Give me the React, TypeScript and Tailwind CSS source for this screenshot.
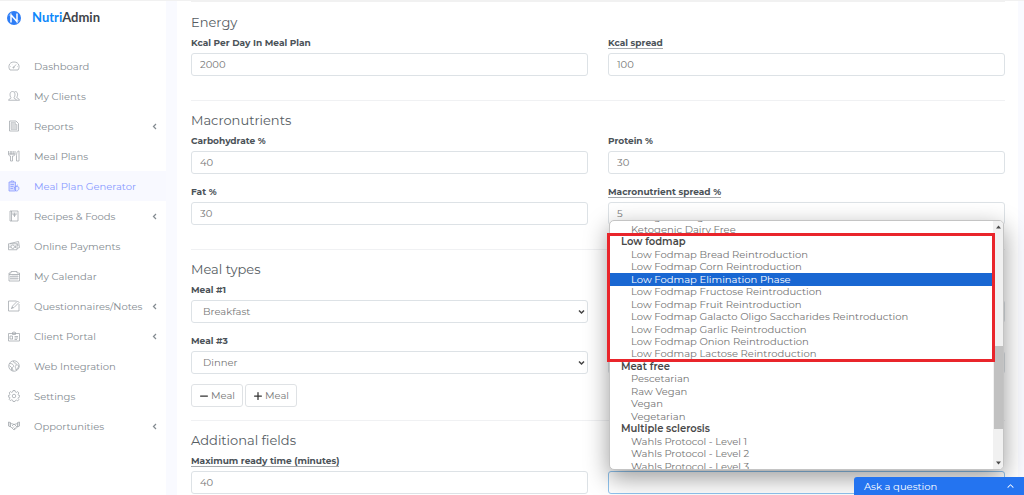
import { useId } from 'react';
import type { ReactNode } from 'react';
import clsx from 'clsx';
import { FaChevronUp, FaMinus, FaPlus } from 'react-icons/fa6';

interface NavItem {
  label: string;
  icon: ReactNode;
  active?: boolean;
  expandable?: boolean;
}

const NAV_ITEMS: NavItem[] = [
  {
    label: 'Dashboard',
    icon: (
      <>
        <path d="M4 20C0 15 1 4 12 4s12 11 8 16z" />
        <path d="M11 15l5-6M5 13h1M18 13h1M8 8.500l.5.5" />
        <circle cx="11" cy="15" r="1.200" />
      </>
    ),
  },
  {
    label: 'My Clients',
    icon: (
      <>
        <path d="M1 20.500c0-3 5-2.500 5-5-3-4-3-12.500 3-12.500s6 8.500 3 12.500c0 2.500 5 2 5 5z" />
        <path d="M13 3.500c6-2 8 6 4.500 11 0 2.500 5.500 2.500 5.500 6h-6" />
      </>
    ),
  },
  {
    label: 'Reports',
    expandable: true,
    icon: (
      <>
        <path d="M3 2h13l5 5v15H3z" />
        <path d="M6 5h9v4h3v10H6z" fill="currentColor" fillOpacity="0.4" strokeOpacity="0.5" />
      </>
    ),
  },
  {
    label: 'Meal Plans',
    icon: (
      <>
        <path d="M1 2v7c0 2 3 3 4 3v10h4V12c2 0 5-1 5-3V2M4.500 2v7M7.500 2v7M10.500 2v7" />
        <path d="M1 8h13" />
        <path d="M22 2c-4 0-5 4-5 12v8h5z" />
      </>
    ),
  },
  {
    label: 'Meal Plan Generator',
    active: true,
    icon: (
      <>
        <path d="M2 4h13v18H2z" fill="currentColor" fillOpacity="0.3" />
        <path d="M6 4V2h5v2M5 9h7M5 13h6M5 17h5" />
        <path d="M13 14c2-2 9-2 9 2s-3 6-5 6-5-3-4-8zM17 13c0-2 1-3 3-3" fill="currentColor" fillOpacity="0.15" />
      </>
    ),
  },
  {
    label: 'Recipes & Foods',
    expandable: true,
    icon: (
      <>
        <path d="M4 2h16v20H4zM7 2v20" />
        <path d="M10 5v5h6V5M13 5v9" />
      </>
    ),
  },
  {
    label: 'Online Payments',
    icon: (
      <>
        <path d="M1 7.500h17v12H1z" />
        <path d="M4 7L21 3l2 12-5 2" />
        <circle cx="9.500" cy="13.500" r="3.500" />
        <path d="M4 11v5M15 11v5M19 7l1 5" />
      </>
    ),
  },
  {
    label: 'My Calendar',
    icon: (
      <>
        <path d="M2 6h4V3h12v3h5v16H2zM2 9h21" />
        <path d="M6 11v9M10 9v11M14 9v11M18 9v11M4 13h17M4 17h17" strokeOpacity="0.7" />
      </>
    ),
  },
  {
    label: 'Questionnaires/Notes',
    expandable: true,
    icon: (
      <>
        <path d="M17 2H1v20h21V8" />
        <path d="M7 17l2-5L19 2l3 3-10 10zM7 17l3-3" />
      </>
    ),
  },
  {
    label: 'Client Portal',
    expandable: true,
    icon: (
      <>
        <path d="M1 7h22v15H1zM9 9V5h1.500a1.500 1.500 0 013 0H15v4z" />
        <path d="M4 18v-6h5v6M4 18h6M13 13h7M13 16h7M13 19h5" />
      </>
    ),
  },
  {
    label: 'Web Integration',
    icon: (
      <>
        <circle cx="12" cy="12" r="10.500" />
        <path d="M3 7c4 0 7 1 8 4s-3 3-2 6l1 5M3 11l4 4v5M11 2c-1 3 2 4 4 4s2 4 0 6 1 3 1 8c3-2 4-5 6-8-2-1-3-3-5-2" />
      </>
    ),
  },
  {
    label: 'Settings',
    icon: (
      <>
        <path d="M10 1h4l.7 3 2 .9 2.700-1.700 2.300 2.600-1.600 2.700.8 2 2.600.5v3l-2.600.7-.8 2 1.600 2.700-2.300 2.400-2.700-1.600-2 .8L14 23h-4l-.7-2.700-2-.8-2.700 1.600-2.300-2.400 1.600-2.700-.8-2L.5 14v-3l2.600-.5.8-2-1.600-2.700 2.300-2.600 2.700 1.700 2-.9z" />
        <circle cx="12" cy="12" r="3.500" />
      </>
    ),
  },
  {
    label: 'Opportunities',
    expandable: true,
    icon: (
      <>
        <path d="M1 4l4 1v9l-4-2zM23 4l-4 1v9l4-2z" fill="currentColor" fillOpacity="0.3" />
        <path d="M5 7l5 1 2 1 7-2M5 13l7 7 7-6M8 12l4-4 6 6M9 16l3-3M12 18l3-3" />
      </>
    ),
  },
];

type DietRow = { label: string; kind?: 'group' | 'selected' };

const DIET_ROWS: DietRow[] = [
  { label: 'Ketogenic Vegan' },
  { label: 'Ketogenic Dairy Free' },
  { label: 'Low fodmap', kind: 'group' },
  { label: 'Low Fodmap Bread Reintroduction' },
  { label: 'Low Fodmap Corn Reintroduction' },
  { label: 'Low Fodmap Elimination Phase', kind: 'selected' },
  { label: 'Low Fodmap Fructose Reintroduction' },
  { label: 'Low Fodmap Fruit Reintroduction' },
  { label: 'Low Fodmap Galacto Oligo Saccharides Reintroduction' },
  { label: 'Low Fodmap Garlic Reintroduction' },
  { label: 'Low Fodmap Onion Reintroduction' },
  { label: 'Low Fodmap Lactose Reintroduction' },
  { label: 'Meat free', kind: 'group' },
  { label: 'Pescetarian' },
  { label: 'Raw Vegan' },
  { label: 'Vegan' },
  { label: 'Vegetarian' },
  { label: 'Multiple sclerosis', kind: 'group' },
  { label: 'Wahls Protocol - Level 1' },
  { label: 'Wahls Protocol - Level 2' },
  { label: 'Wahls Protocol - Level 3' },
];

const MEALS = ['Breakfast', 'Lunch', 'Dinner', 'Snack'];

const CONTROL =
  'block h-[23px] w-full rounded-[3px] border border-[#dde2e6] bg-white text-[10px] text-[#777] outline-none';

function Sidebar() {
  return (
    <aside className="w-[166px] shrink-0 bg-white pt-[7px]">
      <a href="#" className="flex h-5 items-center gap-[11px] pl-[7px]">
        <svg className="size-[14px]" viewBox="0 0 28 28" aria-hidden="true">
          <circle cx="14" cy="14" r="14" fill="#2d7df6" />
          <path d="M8 23V8l12 13V5" fill="none" stroke="#fff" strokeWidth="3" />
          <path d="M4 10c1-3 3-5 6-6M24 18c-1 3-3 5-6 6" fill="none" stroke="#9cc4ff" strokeWidth="1.500" />
        </svg>
        <span className="font-['Lato'] text-[13px] font-bold text-[#3f444a]">
          <span className="text-[#0d88fb]">Nutri</span>Admin
        </span>
      </a>
      <nav className="mt-[23px]">
        {NAV_ITEMS.map((item) => (
          <a
            key={item.label}
            href="#"
            className={clsx(
              'flex h-[30px] items-center pr-2 pl-2 text-[10px]',
              item.active ? 'bg-[#f8f9ff] text-[#8899ff]' : 'text-[#858c92]'
            )}
          >
            <svg
              className={clsx('mr-[14px] size-3 shrink-0', item.active ? 'text-[#8899ff]' : 'text-[#a0a6ab]')}
              viewBox="0 0 24 24"
              fill="none"
              stroke="currentColor"
              strokeWidth={1.5}
              aria-hidden="true"
            >
              {item.icon}
            </svg>
            <span className="flex-1 whitespace-nowrap">{item.label}</span>
            {item.expandable && (
              <svg className="size-[7px]" viewBox="0 0 14 14" fill="none" stroke="currentColor" strokeWidth={2.5} aria-hidden="true">
                <path d="M10 2L5 7l5 5" />
              </svg>
            )}
          </a>
        ))}
      </nav>
    </aside>
  );
}

interface FieldProps {
  label: string;
  hint?: boolean;
  covered?: boolean;
  children: (id: string) => ReactNode;
}

function Field({ label, hint, covered, children }: FieldProps) {
  const id = useId();
  return (
    <div>
      <label
        htmlFor={id}
        className={clsx(
          'mb-[3px] flex h-[14px] text-[9px] leading-[14px] font-bold text-[#4c5359]',
          covered && 'invisible'
        )}
      >
        <span className={clsx('whitespace-nowrap', hint && 'h-[13px] border-b border-[#a5a9ad]')}>{label}</span>
      </label>
      {children(id)}
    </div>
  );
}

function TextField({ label, value, hint }: { label: string; value: string; hint?: boolean }) {
  return (
    <Field label={label} hint={hint}>
      {(id) => <input id={id} type="text" defaultValue={value} className={clsx(CONTROL, 'px-2')} />}
    </Field>
  );
}

function MealField({ label, value, covered }: { label: string; value: string; covered?: boolean }) {
  return (
    <Field label={label} covered={covered}>
      {(id) => (
        <div className="relative">
          <select id={id} defaultValue={value} className={clsx(CONTROL, 'appearance-none px-[11px]')}>
            {MEALS.map((meal) => (
              <option key={meal}>{meal}</option>
            ))}
          </select>
          <svg
            className="pointer-events-none absolute top-2 right-[3px] size-[7px]"
            viewBox="0 0 14 14"
            fill="none"
            stroke="#444"
            strokeWidth={3}
            aria-hidden="true"
          >
            <path d="M2 5l5 5 5-5" />
          </svg>
        </div>
      )}
    </Field>
  );
}

function Section({ title, footer, children }: { title: string; footer?: ReactNode; children: ReactNode }) {
  return (
    <section className={clsx('border-b border-[#f0f1f3] pt-[9px]', footer ? 'pb-[13px]' : 'pb-6')}>
      <h2 className="mb-1 text-[13px] leading-5 text-[#565d63]">{title}</h2>
      <div className="grid grid-cols-2 gap-x-5 gap-y-[11px]">{children}</div>
      {footer}
    </section>
  );
}

/** Open list of diets, scrolled part way down, hanging above its select. */
function DietPopup() {
  return (
    <div className="absolute inset-x-px bottom-full z-10 mb-px h-[250px]">
      <div className="flex h-full overflow-hidden rounded-[5px] border border-[#c4c4c4] bg-white shadow-[0_8px_24px_rgba(0,0,0,0.4)]">
        <ul role="listbox" aria-label="Diets" className="-mt-[10px] grid h-[262px] flex-1 auto-rows-fr">
          {DIET_ROWS.map((row) => (
            <li
              key={row.label}
              role={row.kind === 'group' ? 'presentation' : 'option'}
              aria-selected={row.kind === 'selected'}
              className={clsx(
                'flex items-center text-[10px] leading-3 whitespace-nowrap',
                row.kind === 'group' && 'pl-[11px] font-semibold text-[#484848]',
                row.kind === 'selected' && 'bg-[#1967d2] pl-[21px] text-white',
                !row.kind && 'pl-[21px] text-[#747474]'
              )}
            >
              {row.label}
            </li>
          ))}
        </ul>
        <div className="flex w-[10px] flex-col items-center bg-[#f1f1f1]" aria-hidden="true">
          <svg className="mt-1 h-1 w-[5px]" viewBox="0 0 10 8" fill="#4a4a4a">
            <path d="M5 1l5 6H0z" />
          </svg>
          <div className="mt-[117px] h-[83px] w-[9px] bg-[#c1c1c1]" />
          <svg className="mt-auto mb-1 h-1 w-[5px]" viewBox="0 0 10 8" fill="#4a4a4a">
            <path d="M0 1h10L5 7z" />
          </svg>
        </div>
      </div>
      {/* Red frame around the low fodmap group */}
      <div className="pointer-events-none absolute top-[13px] right-[9px] -left-[2px] h-[129px] border-3 border-[#e9252b]" />
    </div>
  );
}

const MEAL_BUTTON =
  'flex h-[23px] items-center gap-[2px] rounded-[3px] border border-[#dfe2e5] bg-white px-[7px] text-[10px] text-[#777]';

export default function App() {
  return (
    <div className="relative flex h-screen overflow-hidden border-t border-[#f1f1f1] bg-[#f9faff] font-['Montserrat','Inter',sans-serif]">
      <Sidebar />
      <main className="min-w-0 flex-1 pr-[6px] pl-[11px]">
        <div className="min-h-full bg-white pr-[13px] pl-[14px]">
          <div className="mb-px h-px bg-[#f1f1f1]" />
          <Section title="Energy">
            <TextField label="Kcal Per Day In Meal Plan" value="2000" />
            <TextField label="Kcal spread" value="100" hint />
          </Section>
          <Section title="Macronutrients">
            <TextField label="Carbohydrate %" value="40" />
            <TextField label="Protein %" value="30" />
            <TextField label="Fat %" value="30" />
            <TextField label="Macronutrient spread %" value="5" hint />
          </Section>
          <Section
            title="Meal types"
            footer={
              <div className="mt-[10px] flex gap-[2px]">
                <button type="button" className={MEAL_BUTTON}>
                  <FaMinus className="size-[10px] text-[#333]" />
                  Meal
                </button>
                <button type="button" className={MEAL_BUTTON}>
                  <FaPlus className="size-[10px] text-[#333]" />
                  Meal
                </button>
              </div>
            }
          >
            <MealField label="Meal #1" value="Breakfast" />
            <MealField label="Meal #2" value="Lunch" covered />
            <MealField label="Meal #3" value="Dinner" />
            <MealField label="Meal #4" value="Snack" covered />
          </Section>
          <Section title="Additional fields">
            <TextField label="Maximum ready time (minutes)" value="40" hint />
            <Field label="Diets" covered>
              {(id) => (
                <div className="relative">
                  <select
                    id={id}
                    className="block h-[23px] w-full appearance-none rounded-[3px] border border-[#8fc3ee] bg-white px-2 text-[10px]"
                  />
                  <DietPopup />
                </div>
              )}
            </Field>
          </Section>
        </div>
      </main>
      <button
        type="button"
        className="absolute right-0 bottom-0 z-20 flex h-[18px] w-[170px] items-center justify-between rounded-tl-[3px] bg-[#2474f0] px-[10px] text-[10px] text-white"
      >
        Ask a question
        <FaChevronUp className="size-[7px]" />
      </button>
    </div>
  );
}
